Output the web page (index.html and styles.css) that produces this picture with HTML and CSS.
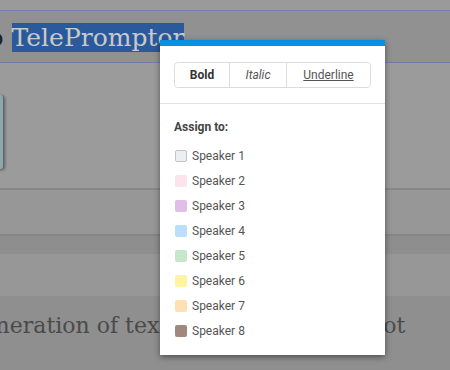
FILE: index.html
```html
<!DOCTYPE html>
<html lang="en">
<head>
    <meta charset="UTF-8">
    <title>TelePromptor</title>
    <link rel="stylesheet" href="styles.css">
</head>
<body>
    <div class="top-gap"></div>
    <div class="title-bar">
        <span class="title-pre">Demo</span> <span class="selected">TelePromptor</span>
    </div>

    <div class="panel">
        <div class="side-card"></div>
    </div>
    <div class="row-a"></div>
    <div class="row-b"></div>
    <div class="row-c"></div>
    <div class="text-row">
        <p class="script-line">Generation of text written for the robot</p>
    </div>

    <!-- Format popup -->
    <div class="popup">
        <div class="btn-group">
            <button class="btn btn-bold">Bold</button>
            <button class="btn btn-italic">Italic</button>
            <button class="btn btn-underline">Underline</button>
        </div>
        <div class="assign">
            <h4>Assign to:</h4>
            <ul class="speakers">
                <li><span class="swatch sp1"></span>Speaker 1</li>
                <li><span class="swatch sp2"></span>Speaker 2</li>
                <li><span class="swatch sp3"></span>Speaker 3</li>
                <li><span class="swatch sp4"></span>Speaker 4</li>
                <li><span class="swatch sp5"></span>Speaker 5</li>
                <li><span class="swatch sp6"></span>Speaker 6</li>
                <li><span class="swatch sp7"></span>Speaker 7</li>
                <li><span class="swatch sp8"></span>Speaker 8</li>
            </ul>
        </div>
    </div>
</body>
</html>
```

FILE: styles.css
```css
body {
    margin: 0;
    padding: 0;
    width: 450px;
    height: 370px;
    overflow: hidden;
    background-color: #9a9a9a;
    font-family: Roboto, Arial, sans-serif;
    position: relative;
}
.top-gap {
    height: 10px;
}
.title-bar {
    height: 53px;
    border-top: 1px solid #7082a6;
    border-bottom: 1px solid #6d80a6;
    background: #919191;
    font-family: "DejaVu Serif", serif;
    font-size: 25px;
    line-height: 30px;
    padding-top: 12px;
    box-sizing: border-box;
    white-space: nowrap;
    margin-left: -70px;
    color: #222;
}
.selected {
    background: #2a5a9c;
    color: #c9c9c9;
}
.panel {
    height: 125px;
    background: #9b9b9b;
    padding-top: 32px;
    box-sizing: border-box;
}
.side-card {
    width: 40px;
    height: 74px;
    margin-left: -37px;
    background: #8fa6aa;
    border-right: 1px solid #5a6a6c;
    border-radius: 3px;
    box-shadow: 1px 1px 3px rgba(0, 0, 0, 0.4);
}
.row-a {
    height: 44px;
    border-top: 2px solid #888;
    border-bottom: 2px solid #868686;
    background: #979797;
}
.row-b {
    height: 18px;
    background: #8e8e8e;
}
.row-c {
    height: 42px;
    background: #979797;
}
.text-row {
    height: 80px;
    background: #8f8f8f;
}
.script-line {
    margin: 0;
    padding-top: 17px;
    margin-left: -35px;
    font-family: "DejaVu Serif", serif;
    font-size: 22px;
    color: #4a4a4a;
    white-space: nowrap;
}
.popup {
    position: absolute;
    left: 160px;
    top: 40px;
    width: 225px;
    height: 315px;
    background: #fff;
    border-top: 6px solid #0a8fe4;
    box-sizing: border-box;
    box-shadow: 0 2px 6px rgba(0, 0, 0, 0.45);
}
.btn-group {
    display: flex;
    margin: 16px 14px 0 14px;
    border: 1px solid #dcdcdc;
    border-radius: 4px;
    height: 26px;
    box-sizing: border-box;
}
.btn {
    border: none;
    background: #fff;
    font-family: Roboto, Arial, sans-serif;
    font-size: 12px;
    color: #555;
    padding: 0;
    border-radius: 4px;
}
.btn-bold {
    width: 55px;
    font-weight: bold;
    color: #333;
    border-right: 1px solid #dcdcdc;
    border-radius: 4px 0 0 4px;
}
.btn-italic {
    width: 57px;
    font-style: italic;
    border-right: 1px solid #dcdcdc;
    border-radius: 0;
}
.btn-underline {
    flex: 1;
    text-decoration: underline;
}
.assign {
    margin-top: 15px;
    border-top: 1px solid #e2e2e2;
    padding: 16px 14px 0 14px;
}
.assign h4 {
    margin: 0 0 9px 0;
    font-size: 12px;
    color: #444;
}
.speakers {
    list-style: none;
    margin: 0;
    padding: 0;
}
.speakers li {
    display: flex;
    align-items: center;
    height: 25px;
    font-size: 12px;
    color: #555;
}
.swatch {
    width: 12px;
    height: 12px;
    border-radius: 2px;
    margin: 0 5px 0 1px;
    box-sizing: border-box;
}
.sp1 { background: #eceff1; border: 1px solid #c4c4c4; }
.sp2 { background: #fce4ec; }
.sp3 { background: #e1bee7; }
.sp4 { background: #bbdefb; }
.sp5 { background: #c8e6c9; }
.sp6 { background: #fff59d; }
.sp7 { background: #ffe0b2; }
.sp8 { background: #a1887f; }
```
